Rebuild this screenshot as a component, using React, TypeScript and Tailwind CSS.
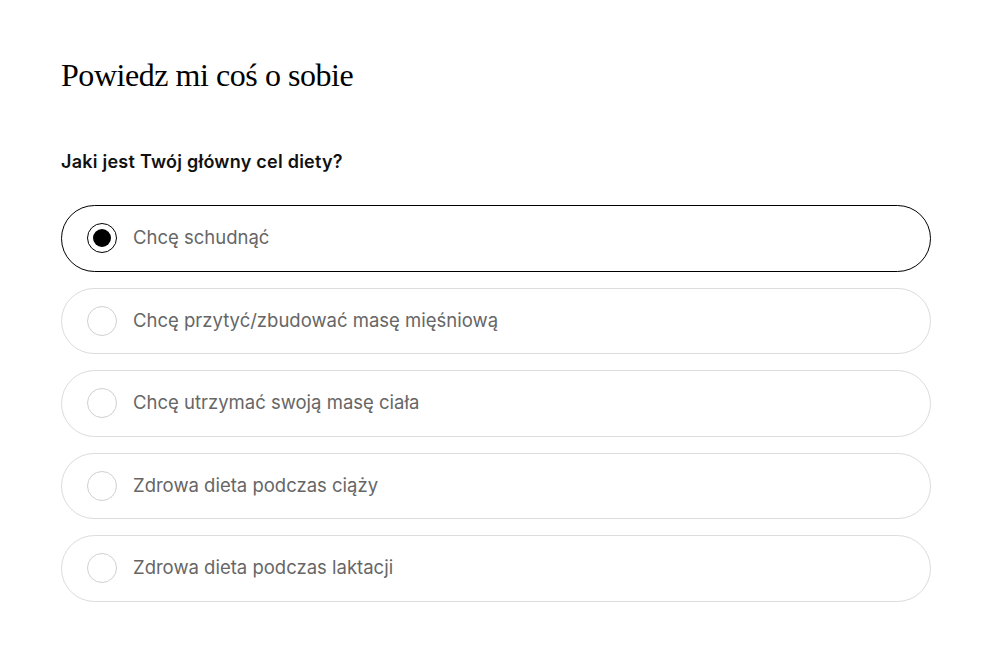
import { useState } from "react";

const options = [
  "Chcę schudnąć",
  "Chcę przytyć/zbudować masę mięśniową",
  "Chcę utrzymać swoją masę ciała",
  "Zdrowa dieta podczas ciąży",
  "Zdrowa dieta podczas laktacji",
];

export default function App() {
  const [selected, setSelected] = useState(0);

  return (
    <div className="min-h-[651px] bg-white px-[61px] pt-[56px] font-['Inter',sans-serif]">
      {/* Heading */}
      <h1 className="font-['Liberation_Serif',serif] text-[32px] leading-[38px] tracking-[-0.45px] text-black">
        Powiedz mi coś o sobie
      </h1>

      {/* Question */}
      <p className="mt-[56px] text-[18px] leading-[24px] font-semibold tracking-[0.25px] text-[#111]">
        Jaki jest Twój główny cel diety?
      </p>

      {/* Options */}
      <div className="mt-[31px] flex w-[870px] flex-col gap-4">
        {options.map((opt, i) => {
          const isSelected = selected === i;
          return (
            <button
              key={opt}
              type="button"
              onClick={() => setSelected(i)}
              className={`flex h-[66.5px] items-center gap-4 rounded-full border bg-white pl-[25px] text-left cursor-pointer ${
                isSelected ? "border-black" : "border-[#dcdcdc]"
              }`}
            >
              <span
                className={`flex h-[30px] w-[30px] shrink-0 items-center justify-center rounded-full border ${
                  isSelected ? "border-black" : "border-[#d0d0d0]"
                }`}
              >
                {isSelected && <span className="h-[18px] w-[18px] rounded-full bg-black" />}
              </span>
              <span className="text-[18.5px] text-[#666]">{opt}</span>
            </button>
          );
        })}
      </div>
    </div>
  );
}
